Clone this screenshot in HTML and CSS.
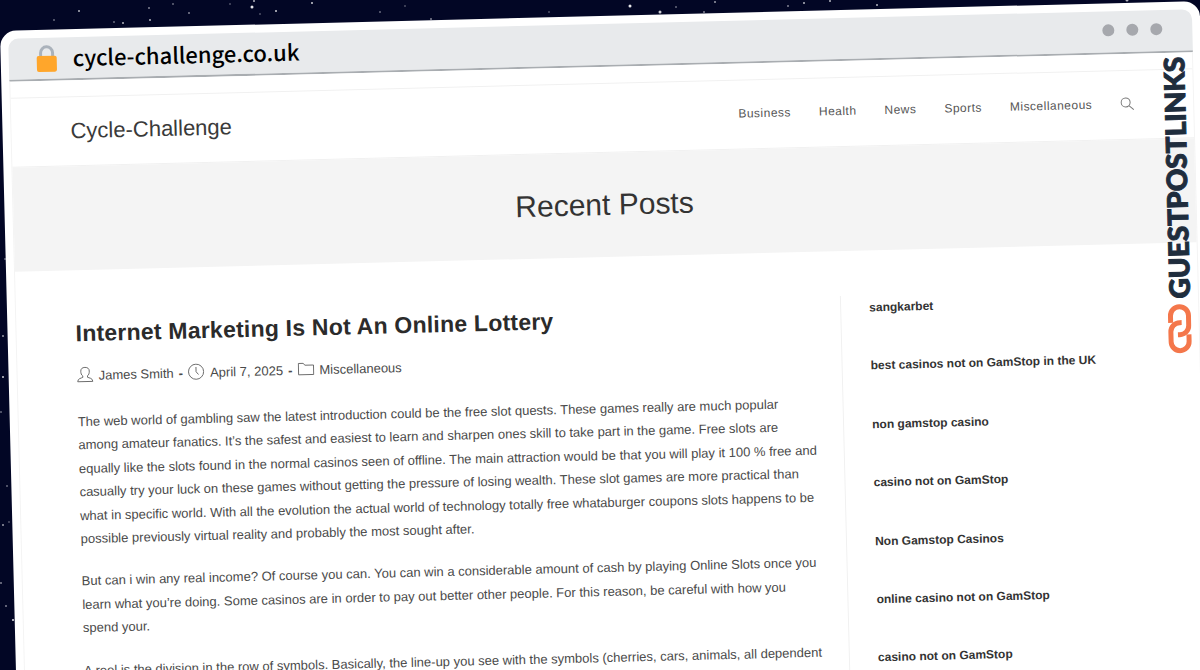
FILE: index.html
```html
<!DOCTYPE html>
<html lang="en">
<head>
  <meta charset="UTF-8" />
  <meta name="viewport" content="width=device-width, initial-scale=1.0"/>
  <title>Cycle-Challenge</title>
  <link rel="stylesheet" href="styles.css">
</head>
<body>
  <svg class="stars" aria-hidden="true">
    <g fill="#fff">
      <circle cx="252" cy="7" r="1.5" opacity=".9"/>
      <circle cx="254" cy="1" r="1" opacity=".7"/>
      <circle cx="276" cy="11" r="1" opacity=".8"/>
      <circle cx="312" cy="3" r="1" opacity=".8"/>
      <circle cx="79" cy="11" r="1" opacity=".7"/>
      <circle cx="123" cy="23" r="1" opacity=".7"/>
      <circle cx="149" cy="8" r="1" opacity=".5"/>
      <circle cx="150" cy="20" r="1" opacity=".7"/>
      <circle cx="173" cy="4" r="1" opacity=".4"/>
      <circle cx="189" cy="13" r="1" opacity=".5"/>
      <circle cx="54" cy="20" r="1" opacity=".4"/>
      <circle cx="114" cy="22" r="1" opacity=".4"/>
      <circle cx="230" cy="4" r="1" opacity=".3"/>
      <circle cx="260" cy="14" r="1" opacity=".3"/>
      <circle cx="380" cy="12" r="1" opacity=".4"/>
      <circle cx="405" cy="6" r="1" opacity=".3"/>
      <circle cx="431" cy="19" r="1" opacity=".5"/>
      <circle cx="549" cy="12" r="1" opacity=".3"/>
      <circle cx="630" cy="6" r="1.5" opacity=".9"/>
      <circle cx="660" cy="12" r="1.5" opacity=".8"/>
      <circle cx="676" cy="7" r="1" opacity=".4"/>
      <circle cx="704" cy="12" r="1" opacity=".5"/>
      <circle cx="715" cy="2" r="1" opacity=".6"/>
      <circle cx="788" cy="6" r="1" opacity=".5"/>
      <circle cx="804" cy="3" r="1" opacity=".7"/>
      <circle cx="830" cy="1" r="1" opacity=".7"/>
      <circle cx="877" cy="5" r="1" opacity=".7"/>
      <circle cx="1127" cy="0" r="1.5" opacity=".7"/>
      <circle cx="5" cy="259" r="1" opacity=".4"/>
      <circle cx="3" cy="336" r="1" opacity=".6"/>
      <circle cx="3" cy="377" r="1" opacity=".8"/>
      <circle cx="1" cy="412" r="1" opacity=".4"/>
      <circle cx="7" cy="486" r="1" opacity=".4"/>
      <circle cx="3" cy="525" r="1" opacity=".6"/>
      <circle cx="9" cy="522" r="1" opacity=".3"/>
      <circle cx="1" cy="583" r="1" opacity=".5"/>
      <circle cx="6" cy="606" r="1" opacity=".5"/>
      <circle cx="13" cy="620" r="1" opacity=".9"/>
    </g>
  </svg>

  <div class="browser">
    <div class="address-bar">
      <svg class="lock" viewBox="0 0 22 28" aria-hidden="true">
        <path d="M5 13V8a6 6 0 0 1 12 0v5" fill="none" stroke="#aab2bb" stroke-width="3"/>
        <rect x="1" y="11" width="20" height="16" rx="2" fill="#ffa62b"/>
      </svg>
      <span class="url">cycle-challenge.co.uk</span>
      <div class="dots"><i></i><i></i><i></i></div>
    </div>

    <div class="screen">
      <header class="site-header">
        <a class="site-name" href="#">Cycle-Challenge</a>
        <nav class="menu">
          <a href="#">Business</a>
          <a href="#">Health</a>
          <a href="#">News</a>
          <a href="#">Sports</a>
          <a href="#">Miscellaneous</a>
          <button class="search" aria-label="Search">
            <svg viewBox="0 0 14 14"><circle cx="5.5" cy="5.5" r="4.500"/><path d="M9 9l4.500 4"/></svg>
          </button>
        </nav>
      </header>

      <div class="banner">
        <h1>Recent Posts</h1>
      </div>

      <div class="content">
        <main class="post">
          <h2>Internet Marketing Is Not An Online Lottery</h2>
          <div class="meta">
            <svg viewBox="0 0 18 18"><path d="M6.500 10.500C5 9.500 4.500 7.500 4.500 5.500 4.500 3 6 1.500 9 1.500s4.500 1.500 4.500 4c0 2-.5 4-2 5v1.500c1.500.8 5.500 1 5.500 4.500H1c0-3.500 4-3.700 5.500-4.500z"/></svg>
            <a href="#">James Smith</a>
            <b>-</b>
            <svg viewBox="0 0 18 18"><circle cx="9" cy="9" r="8"/><path d="M9 4v5l2.500 3"/></svg>
            <span>April 7, 2025</span>
            <b>-</b>
            <svg viewBox="0 0 18 18"><path d="M1 3h5l2 2h9v10H1z"/></svg>
            <a href="#">Miscellaneous</a>
          </div>
          <p>The web world of gambling saw the latest introduction could be the free slot quests. These games really are much popular among amateur fanatics. It’s the safest and easiest to learn and sharpen ones skill to take part in the game. Free slots are equally like the slots found in the normal casinos seen of offline. The main attraction would be that you will play it 100 % free and casually try your luck on these games without getting the pressure of losing wealth. These slot games are more practical than what in specific world. With all the evolution the actual world of technology totally free whataburger coupons slots happens to be possible previously virtual reality and probably the most sought after.</p>
          <p>But can i win any real income? Of course you can. You can win a considerable amount of cash by playing Online Slots once you learn what you’re doing. Some casinos are in order to pay out better other people. For this reason, be careful with how you spend your.</p>
          <p>A reel is the division in the row of symbols. Basically, the line-up you see with the symbols (cherries, cars, animals, all dependent</p>
        </main>

        <aside class="sidebar">
          <a href="#">sangkarbet</a>
          <a href="#">best casinos not on GamStop in the UK</a>
          <a href="#">non gamstop casino</a>
          <a href="#">casino not on GamStop</a>
          <a href="#">Non Gamstop Casinos</a>
          <a href="#">online casino not on GamStop</a>
          <a href="#">casino not on GamStop</a>
        </aside>
      </div>
    </div>

    <div class="brand">
      <span>GUESTPOSTLINKS</span>
      <svg viewBox="0 0 24 50" aria-hidden="true">
        <path d="M3 19V12a9 9 0 0 1 18 0v10a9 9 0 0 1-9 9h-2"/>
        <path d="M21 31v7a9 9 0 0 1-18 0V28a9 9 0 0 1 9-9h2"/>
      </svg>
    </div>
  </div>
</body>
</html>
```

FILE: styles.css
```css
* {
  box-sizing: border-box;
}

body {
  margin: 0;
  height: 100vh;
  overflow: hidden;
  padding-top: 31px;
  background: #020625;
  font-family: "Liberation Sans", Arial, sans-serif;
  color: #4a4a4a;
}

a {
  color: inherit;
  text-decoration: none;
}

h1,
h2,
p {
  margin: 0;
}

.stars {
  position: absolute;
  top: 0;
  left: 0;
  width: 100%;
  height: 100%;
}

/* tilted browser window */
.browser {
  position: relative;
  min-height: 100vh;
  padding: 8px;
  background: #fff;
  border-radius: 16px;
  transform: rotate(-1.43deg);
  transform-origin: 0 0;
}

.address-bar {
  display: flex;
  align-items: center;
  height: 43px;
  padding: 0 30px 0 27px;
  background: #e8eaec;
  border-bottom: 2px solid #a9adb1;
  border-radius: 10px 10px 0 0;
}

.lock {
  width: 22px;
  height: 28px;
}

.url {
  margin-left: 15px;
  font-family: "Noto Sans CJK JP", sans-serif;
  font-size: 22px;
  font-weight: 500;
  line-height: 28px;
  padding-bottom: 3px;
  color: #000;
}

.dots {
  display: flex;
  gap: 12px;
  margin-left: auto;
  padding-bottom: 4px;
}

.dots i {
  width: 12px;
  height: 12px;
  border-radius: 50%;
  background: #a6a8ad;
}

.screen {
  padding-top: 16px;
  border: solid #f4f4f4;
  border-width: 0 1px;
}

.site-header {
  display: flex;
  align-items: center;
  justify-content: space-between;
  height: 70px;
  padding: 0 59px;
  border: solid #f1f1f1;
  border-width: 1px 0;
}

.site-name {
  font-size: 22px;
  color: #3a3a3a;
}

.menu {
  display: flex;
  align-items: center;
  gap: 28px;
  padding-bottom: 3px;
  font-size: 12px;
  letter-spacing: 0.04em;
  color: #555;
}

.search {
  padding: 0;
  border: 0;
  background: none;
}

.search svg {
  display: block;
  width: 14px;
  height: 14px;
  fill: none;
  stroke: #777;
}

.banner {
  padding: 34px 0 35px;
  background: #f4f4f4;
  text-align: center;
}

.banner h1 {
  font-size: 30px;
  font-weight: 400;
  line-height: 35px;
  color: #333;
}

.content {
  display: flex;
  padding: 45px 59px 0;
}

.post {
  width: 72%;
  padding-right: 25px;
  border-right: 1px solid #f1f1f1;
}

.post h2 {
  font-size: 23px;
  line-height: 36px;
  letter-spacing: 0.01em;
  color: #2b2b2b;
}

.meta {
  display: flex;
  align-items: center;
  gap: 5px;
  margin: 15px 0 24px;
  font-size: 13px;
  line-height: 18px;
}

.meta svg {
  width: 17px;
  height: 17px;
  margin-bottom: 3px;
  fill: none;
  stroke: #666;
}

.post p {
  margin-bottom: 19px;
  font-size: 13px;
  line-height: 1.8;
}

.sidebar {
  display: flex;
  flex-direction: column;
  gap: 38px;
  padding: 2px 0 0 28px;
  font-size: 12px;
  font-weight: 700;
  line-height: 1.7;
  color: #333;
}

/* vertical logo over the right edge */
.brand {
  position: absolute;
  top: 55px;
  right: 13px;
  display: flex;
  flex-direction: column;
  align-items: center;
  gap: 5px;
}

.brand span {
  writing-mode: vertical-rl;
  transform: rotate(180deg);
  font-family: "Lato Black", Lato, sans-serif;
  font-size: 28px;
  font-weight: 900;
  line-height: 30px;
  -webkit-text-stroke: 1px #1f2d3d;
  color: #1f2d3d;
}

.brand svg {
  width: 24px;
  height: 50px;
  fill: none;
  stroke: #f4774b;
  stroke-width: 5;
}
```
